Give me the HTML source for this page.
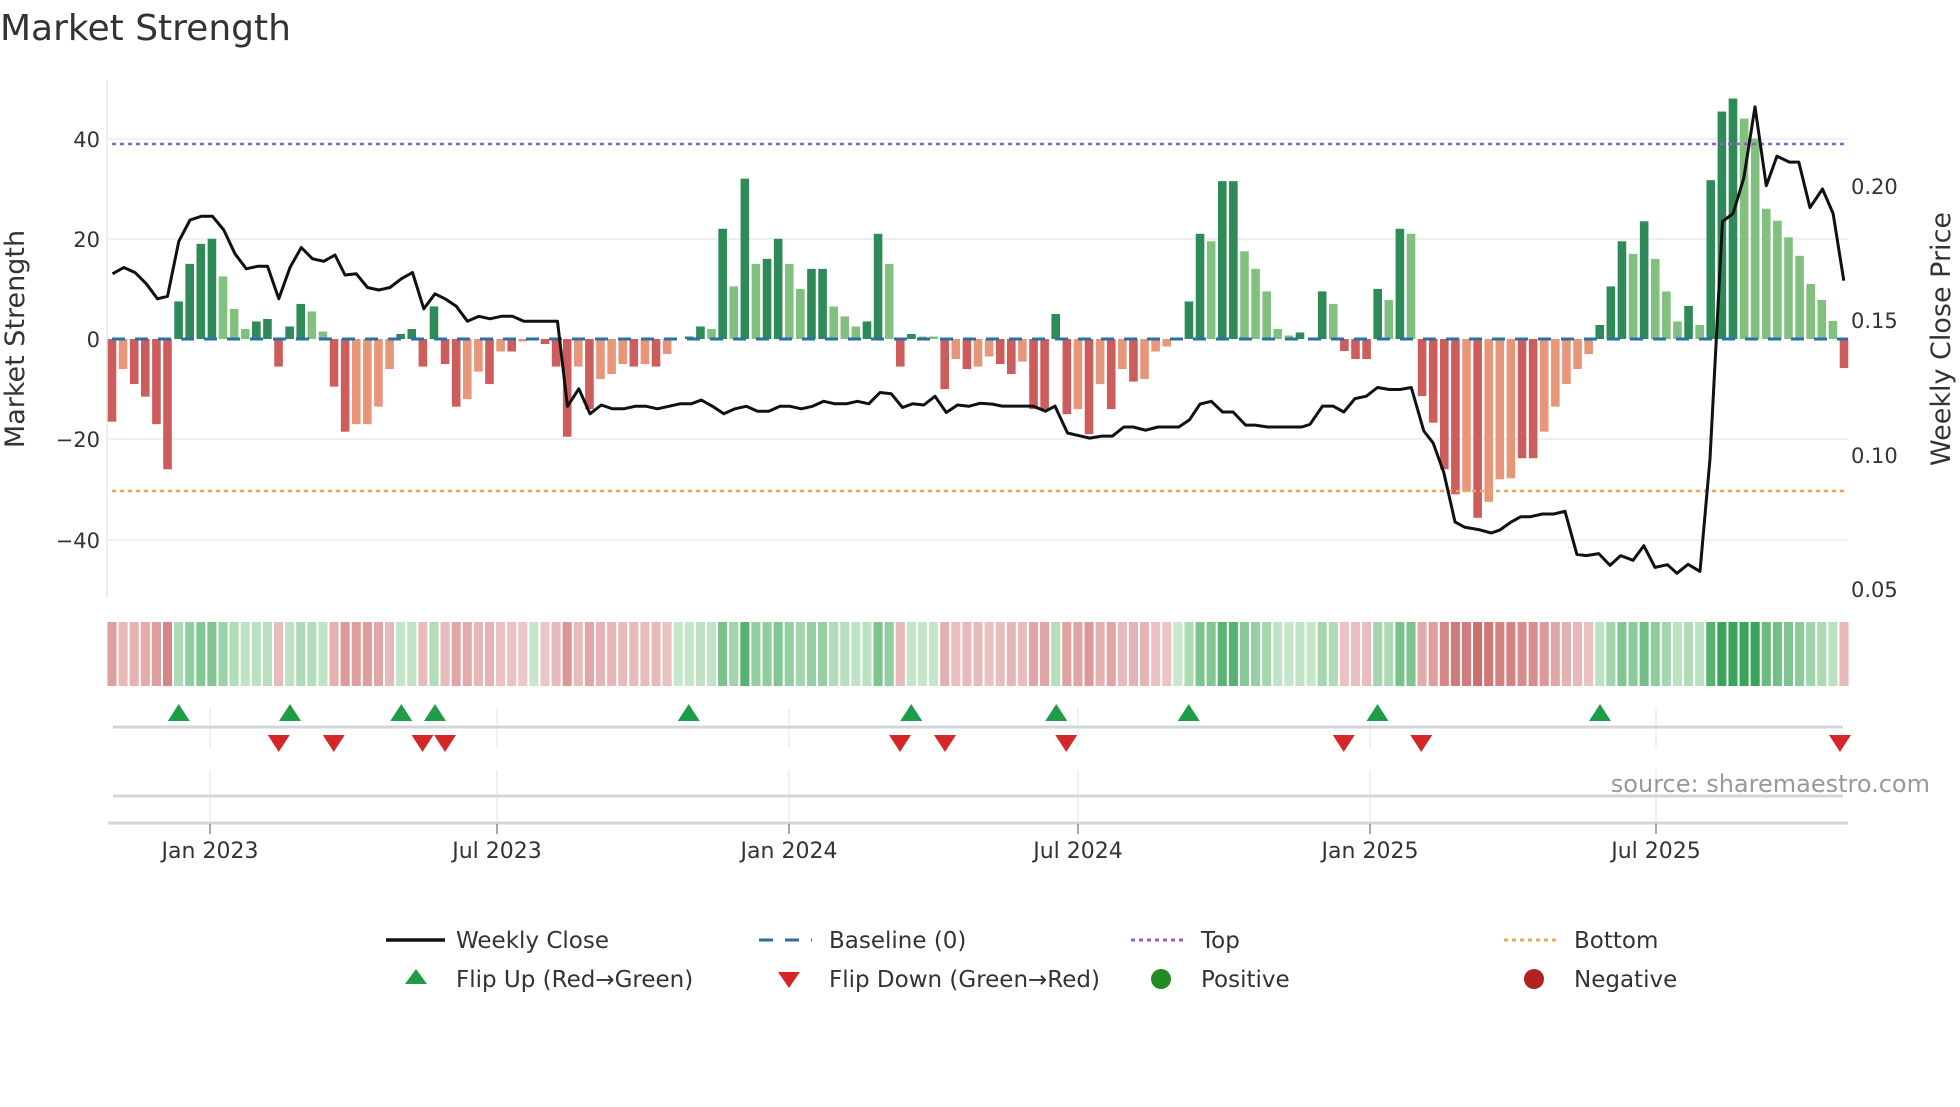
<!DOCTYPE html>
<html><head><meta charset="utf-8"><style>
html,body{margin:0;padding:0;background:#fff;}
body{width:1960px;height:1102px;overflow:hidden;font-family:"Liberation Sans","DejaVu Sans",sans-serif;}
svg text{font-family:"DejaVu Sans","Liberation Sans",sans-serif;}
</style></head><body>
<svg id="s" width="1960" height="1102" xmlns="http://www.w3.org/2000/svg">
<text x="0" y="40" font-size="36" fill="#333">Market Strength</text>
<g stroke="#eef0f3" stroke-width="2">
<line x1="108" x2="1848" y1="139" y2="139"/><line x1="108" x2="1848" y1="239" y2="239"/>
<line x1="108" x2="1848" y1="439" y2="439"/><line x1="108" x2="1848" y1="540" y2="540"/>
</g>
<line x1="107" x2="107" y1="80" y2="598" stroke="#eceff2" stroke-width="2"/>
<g font-size="21" fill="#333" text-anchor="end">
<text x="100" y="147">40</text><text x="100" y="247">20</text><text x="100" y="347">0</text>
<text x="100" y="447">−20</text><text x="100" y="548">−40</text></g>
<g font-size="21" fill="#333">
<text x="1851" y="194">0.20</text><text x="1851" y="328">0.15</text><text x="1851" y="463">0.10</text><text x="1851" y="597">0.05</text></g>
<text transform="translate(24,339) rotate(-90)" font-size="27" fill="#333" text-anchor="middle">Market Strength</text>
<text transform="translate(1950,339) rotate(-90)" font-size="27" fill="#333" text-anchor="middle">Weekly Close Price</text>
<g id="bars"></g>
<line x1="112" x2="1848" y1="339" y2="339" stroke="#2a6fa8" stroke-width="3" stroke-dasharray="13 10"/>
<line x1="112" x2="1848" y1="144" y2="144" stroke="#9b59d6" stroke-width="2.5" stroke-dasharray="4 4"/>
<line x1="112" x2="1848" y1="491" y2="491" stroke="#f0a35e" stroke-width="2.5" stroke-dasharray="4 4"/>
<polyline id="price" fill="none" stroke="#111" stroke-width="3" stroke-linejoin="round"/>
<g id="heat"></g>
<g stroke="#e8edf0" stroke-width="1.5">
<line x1="210" x2="210" y1="708" y2="748"/><line x1="497" x2="497" y1="708" y2="748"/><line x1="789" x2="789" y1="708" y2="748"/><line x1="1078" x2="1078" y1="708" y2="748"/><line x1="1370" x2="1370" y1="708" y2="748"/><line x1="1656" x2="1656" y1="708" y2="748"/>
<line x1="210" x2="210" y1="770" y2="824"/><line x1="497" x2="497" y1="770" y2="824"/><line x1="789" x2="789" y1="770" y2="824"/><line x1="1078" x2="1078" y1="770" y2="824"/><line x1="1370" x2="1370" y1="770" y2="824"/><line x1="1656" x2="1656" y1="770" y2="824"/>
</g>
<line x1="113" x2="1843" y1="727" y2="727" stroke="#d3d6d9" stroke-width="3"/>
<line x1="113" x2="1843" y1="796" y2="796" stroke="#d3d6d9" stroke-width="3"/>
<line x1="108" x2="1848" y1="823" y2="823" stroke="#d3d6d9" stroke-width="3"/>
<g id="marks"></g>
<g stroke="#888" stroke-width="1.5">
<line x1="210" x2="210" y1="824" y2="834"/><line x1="497" x2="497" y1="824" y2="834"/><line x1="789" x2="789" y1="824" y2="834"/><line x1="1078" x2="1078" y1="824" y2="834"/><line x1="1370" x2="1370" y1="824" y2="834"/><line x1="1656" x2="1656" y1="824" y2="834"/></g>
<g font-size="22" fill="#333" text-anchor="middle">
<text x="210" y="858">Jan 2023</text><text x="497" y="858">Jul 2023</text><text x="789" y="858">Jan 2024</text><text x="1078" y="858">Jul 2024</text><text x="1370" y="858">Jan 2025</text><text x="1656" y="858">Jul 2025</text></g>
<text x="1930" y="792" font-size="24" fill="#999" text-anchor="end">source: sharemaestro.com</text>
<g font-size="23" fill="#333">
<line x1="386" x2="445" y1="940" y2="940" stroke="#111" stroke-width="3.5"/><text x="456" y="948">Weekly Close</text>
<line x1="759" x2="812" y1="940" y2="940" stroke="#2a6fa8" stroke-width="3" stroke-dasharray="14 12"/><text x="829" y="948">Baseline (0)</text>
<line x1="1131" x2="1185" y1="940" y2="940" stroke="#9b59d6" stroke-width="3" stroke-dasharray="4 4"/><text x="1201" y="948">Top</text>
<line x1="1504" x2="1557" y1="940" y2="940" stroke="#f0a35e" stroke-width="3" stroke-dasharray="4 4"/><text x="1574" y="948">Bottom</text>
<polygon points="416,969 427,984 405,984" fill="#1e9c48"/><text x="456" y="987">Flip Up (Red→Green)</text>
<polygon points="778,972 800,972 789,988" fill="#d62728"/><text x="829" y="987">Flip Down (Green→Red)</text>
<circle cx="1161" cy="979" r="10" fill="#228b22"/><text x="1201" y="987">Positive</text>
<circle cx="1534" cy="979" r="10" fill="#b22222"/><text x="1574" y="987">Negative</text>
</g>
</svg>
<script>
var NS="http://www.w3.org/2000/svg";
function el(t,a,p){var e=document.createElementNS(NS,t);for(var k in a)e.setAttribute(k,a[k]);document.getElementById(p).appendChild(e);return e;}
var raw="-16.5,-6L,-9,-11.5,-17,-26,7.5,15,19,20,12.5L,6L,2L,3.5,4,-5.5,2.5,7,5.5L,1.5L,-9.5,-18.5,-17L,-17L,-13.5L,-6L,1,2,-5.5,6.5,-5,-13.5,-12L,-6.5L,-9,-2.5L,-2.5,-0.5L,0,-1,-5.5,-19.5,-5.5L,-14,-8L,-7L,-5L,-5.5,-5L,-5.5,-3L,0,0.5,2.5,2L,22,10.5L,32,15L,16,20,15L,10L,14,14,6.5L,4.5L,2.5L,3.5,21,15L,-5.5,1,0.5L,0.5L,-10,-4L,-6,-5.5L,-3.5L,-5,-7,-4.5L,-14,-14,5,-15,-14L,-19,-9L,-14,-6L,-8.5,-8L,-2.5L,-1.5L,0,7.5,21,19.5L,31.5,31.5,17.5L,14L,9.5L,2L,0.7L,1.3,0,9.5,7L,-2.4,-4,-4,10,7.8L,22,21L,-11.4,-16.7,-26,-31,-30.5L,-35.7,-32.5L,-28L,-27.8L,-23.8,-23.8,-18.5L,-13.5L,-9L,-6L,-3L,2.8,10.5,19.5,17L,23.5,16L,9.5L,3.5L,6.6,2.8L,31.7,45.4,48,44L,40L,26L,23.6L,20.3L,16.6L,11L,7.8L,3.6L,-5.8".split(",");
var n=raw.length,pitch=(1844-112)/(n-1);
function mix(a,b,t){return "rgb("+a.map(function(v,i){return Math.round(v+(b[i]-v)*t)}).join(",")+")";}
raw.forEach(function(s,i){
 var L=s.indexOf("L")>=0,v=parseFloat(s),x=112+i*pitch;
 var col=v>=0?(L?"#82c07f":"#2e8a57"):(L?"#e8967a":"#cd5c5c");
 var h=Math.abs(v)*5.01;
 if(h>0.3) el("rect",{x:x-4.3,y:v>=0?339-h:339,width:8.6,height:h,fill:col},"bars");
 var t=Math.min(Math.abs(v)/40,1);
 var c=v>=0?mix([214,238,214],[58,164,90],0.1+0.9*t):mix([244,218,218],[200,100,100],0.15+0.85*t);
 el("rect",{x:x-pitch/2+1,y:622,width:pitch-2,height:64,fill:c},"heat");
});
var p1=[[90,219],[99,214],[108,218],[117,227],[126,239],[134,237],[143,193],[152,176],[161,173],[170,173],[179,184],[188,203],[197,215],[206,213],[214,213],[223,239],[232,214],[241,198],[250,207],[259,209],[268,204],[276,220],[285,219],[294,230],[303,232],[312,230],[321,223],[330,218],[339,247],[348,235],[356,239],[365,245],[374,257],[383,253],[392,255],[401,253],[410,253],[419,257],[428,257],[437,257],[446,257],[454,325],[463,311],[472,331],[481,324],[490,327],[499,327],[508,325],[517,325],[526,327],[535,325],[544,323],[553,323],[561,320],[570,325],[579,331],[588,327],[597,325],[606,329],[615,329],[624,325],[632,325],[641,327],[650,325],[659,321],[668,323],[677,323],[686,321],[695,323],[704,314],[713,315],[722,326],[730,323],[739,324],[748,317],[757,330],[766,324],[775,325]];
var p2=[[0,1020],[20,1022],[35,1027],[85,1027],[105,1040],[120,1027],[140,1095],[175,1108],[195,1103],[212,1103],[230,1080],[245,1080],[265,1088],[285,1080],[318,1080],[335,1062],[352,1022],[370,1015],[388,1042],[405,1042],[425,1075],[440,1075],[460,1080],[515,1080],[528,1073],[548,1027],[565,1027],[582,1042],[600,1008],[618,1002],[636,980],[655,985],[672,985],[690,980],[710,1090],[725,1120],[742,1195],[760,1320],[775,1333],[800,1340],[818,1348],[832,1340],[850,1320],[865,1307],[880,1307],[900,1300],[918,1300],[936,1293],[955,1402],[970,1405],[990,1400],[1008,1430],[1025,1405],[1045,1417],[1062,1380],[1080,1435],[1100,1428],[1115,1450],[1133,1427],[1152,1445],[1168,1160],[1188,560],[1205,540],[1222,450],[1240,270],[1258,470],[1275,395],[1295,410],[1310,410],[1328,525],[1348,478],[1365,540],[1382,710]];
var pts=p1.map(function(p){return (p[0]*1.25).toFixed(1)+","+(p[1]*1.25).toFixed(1)}).concat(p2.map(function(p){return (980+p[0]/1.6).toFixed(1)+","+(p[1]/2.529).toFixed(1)}));
document.getElementById("price").setAttribute("points",pts.join(" "));
[143,232,321,348,551,729,845,951,1102,1280].forEach(function(d){var x=d*1.25;el("polygon",{points:x+",704 "+(x+11)+",721 "+(x-11)+",721",fill:"#1e9c48"},"marks");});
[223,267,338,356,720,756,853,1075,1137,1472].forEach(function(d){var x=d*1.25;el("polygon",{points:(x-11)+",735 "+(x+11)+",735 "+x+",752",fill:"#d62728"},"marks");});
</script>
</body></html>
